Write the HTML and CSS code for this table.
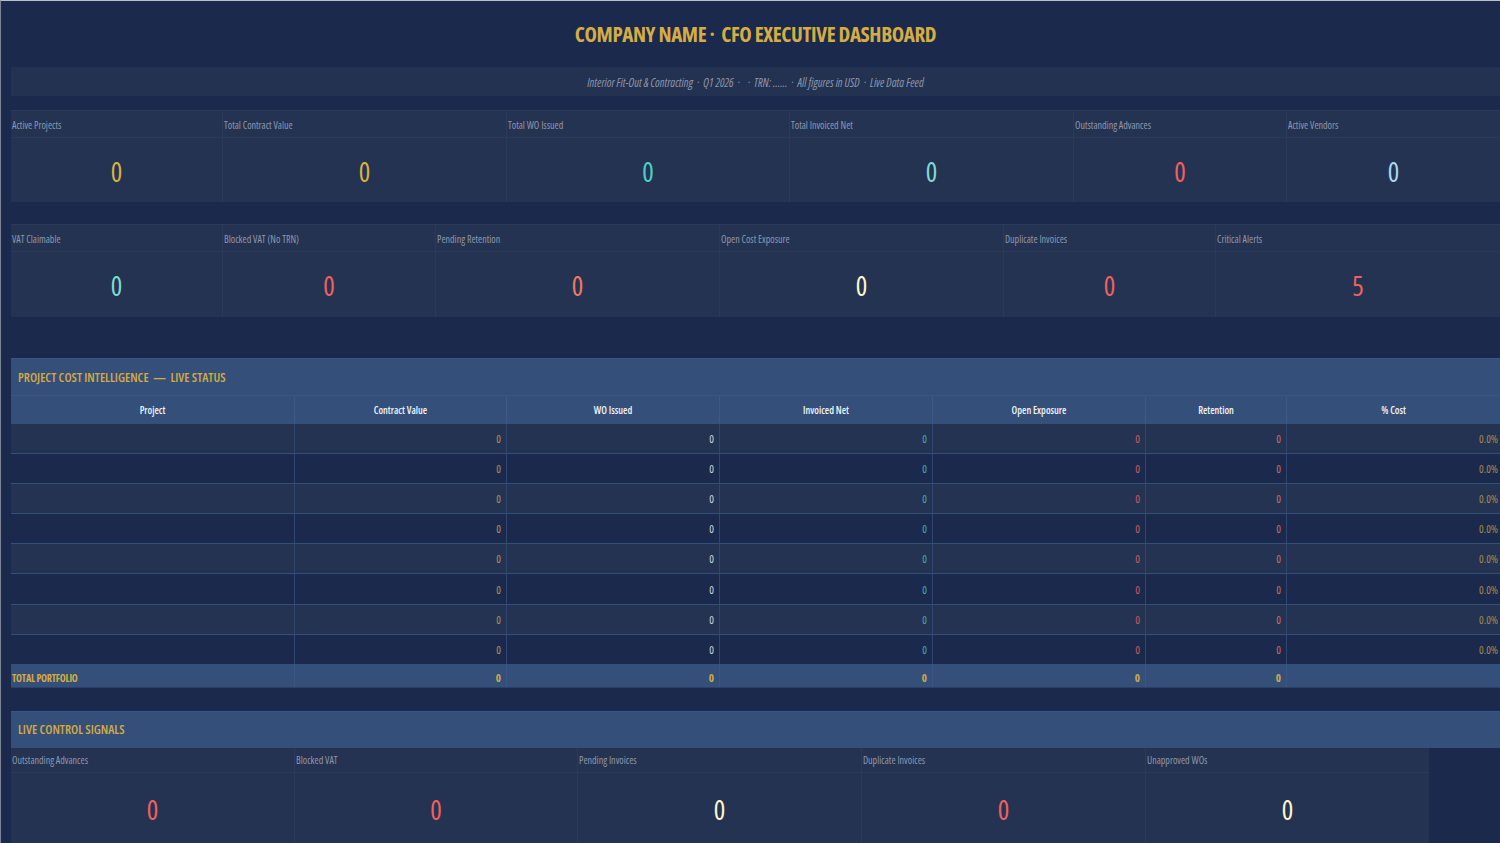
FILE: index.html
```html
<!DOCTYPE html>
<html lang="en">
<head>
<meta charset="utf-8">
<title>CFO Executive Dashboard</title>
<link rel="stylesheet" href="styles.css">
</head>
<body>
<div class="page">
  <header class="title-bar">
    <h1 class="title">COMPANY NAME ·&nbsp; CFO EXECUTIVE DASHBOARD</h1>
  </header>
  <div class="subtitle">Interior Fit-Out &amp; Contracting &nbsp;·&nbsp; Q1 2026 &nbsp;· &nbsp; &nbsp;· &nbsp;TRN: …… &nbsp;· &nbsp;All figures in USD &nbsp;· &nbsp;Live Data Feed</div>

  <section class="kpi-row kpi-row-1">
    <div class="kpi"><div class="kpi-label">Active Projects</div><div class="kpi-value gold">0</div></div>
    <div class="kpi"><div class="kpi-label">Total Contract Value</div><div class="kpi-value gold">0</div></div>
    <div class="kpi"><div class="kpi-label">Total WO Issued</div><div class="kpi-value teal">0</div></div>
    <div class="kpi"><div class="kpi-label">Total Invoiced Net</div><div class="kpi-value mint">0</div></div>
    <div class="kpi"><div class="kpi-label">Outstanding Advances</div><div class="kpi-value red">0</div></div>
    <div class="kpi"><div class="kpi-label">Active Vendors</div><div class="kpi-value sky">0</div></div>
  </section>

  <section class="kpi-row kpi-row-2">
    <div class="kpi"><div class="kpi-label">VAT Claimable</div><div class="kpi-value mint">0</div></div>
    <div class="kpi"><div class="kpi-label">Blocked VAT (No TRN)</div><div class="kpi-value red">0</div></div>
    <div class="kpi"><div class="kpi-label">Pending Retention</div><div class="kpi-value salmon">0</div></div>
    <div class="kpi"><div class="kpi-label">Open Cost Exposure</div><div class="kpi-value cream">0</div></div>
    <div class="kpi"><div class="kpi-label">Duplicate Invoices</div><div class="kpi-value red">0</div></div>
    <div class="kpi"><div class="kpi-label">Critical Alerts</div><div class="kpi-value red">5</div></div>
  </section>

  <section class="block block-table">
    <h2 class="section-title">PROJECT COST INTELLIGENCE &nbsp;—&nbsp; LIVE STATUS</h2>
    <div class="table">
      <div class="tr thead">
        <div class="th">Project</div>
        <div class="th">Contract Value</div>
        <div class="th">WO Issued</div>
        <div class="th">Invoiced Net</div>
        <div class="th">Open Exposure</div>
        <div class="th">Retention</div>
        <div class="th">% Cost</div>
      </div>
      <div class="tr row odd"><div class="td"></div><div class="td c-gold">0</div><div class="td c-white">0</div><div class="td c-teal">0</div><div class="td c-red">0</div><div class="td c-salmon">0</div><div class="td c-olive">0.0%</div></div>
      <div class="tr row even"><div class="td"></div><div class="td c-gold">0</div><div class="td c-white">0</div><div class="td c-teal">0</div><div class="td c-red">0</div><div class="td c-salmon">0</div><div class="td c-olive">0.0%</div></div>
      <div class="tr row odd"><div class="td"></div><div class="td c-gold">0</div><div class="td c-white">0</div><div class="td c-teal">0</div><div class="td c-red">0</div><div class="td c-salmon">0</div><div class="td c-olive">0.0%</div></div>
      <div class="tr row even"><div class="td"></div><div class="td c-gold">0</div><div class="td c-white">0</div><div class="td c-teal">0</div><div class="td c-red">0</div><div class="td c-salmon">0</div><div class="td c-olive">0.0%</div></div>
      <div class="tr row odd"><div class="td"></div><div class="td c-gold">0</div><div class="td c-white">0</div><div class="td c-teal">0</div><div class="td c-red">0</div><div class="td c-salmon">0</div><div class="td c-olive">0.0%</div></div>
      <div class="tr row even"><div class="td"></div><div class="td c-gold">0</div><div class="td c-white">0</div><div class="td c-teal">0</div><div class="td c-red">0</div><div class="td c-salmon">0</div><div class="td c-olive">0.0%</div></div>
      <div class="tr row odd"><div class="td"></div><div class="td c-gold">0</div><div class="td c-white">0</div><div class="td c-teal">0</div><div class="td c-red">0</div><div class="td c-salmon">0</div><div class="td c-olive">0.0%</div></div>
      <div class="tr row even"><div class="td"></div><div class="td c-gold">0</div><div class="td c-white">0</div><div class="td c-teal">0</div><div class="td c-red">0</div><div class="td c-salmon">0</div><div class="td c-olive">0.0%</div></div>
      <div class="tr total"><div class="td total-label">TOTAL PORTFOLIO</div><div class="td">0</div><div class="td">0</div><div class="td">0</div><div class="td">0</div><div class="td">0</div><div class="td"></div></div>
    </div>
  </section>

  <section class="block block-signals">
    <h2 class="section-title">LIVE CONTROL SIGNALS</h2>
    <div class="signals">
      <div class="kpi"><div class="kpi-label">Outstanding Advances</div><div class="kpi-value red">0</div></div>
      <div class="kpi"><div class="kpi-label">Blocked VAT</div><div class="kpi-value red">0</div></div>
      <div class="kpi"><div class="kpi-label">Pending Invoices</div><div class="kpi-value cream">0</div></div>
      <div class="kpi"><div class="kpi-label">Duplicate Invoices</div><div class="kpi-value red">0</div></div>
      <div class="kpi"><div class="kpi-label">Unapproved WOs</div><div class="kpi-value cream">0</div></div>
    </div>
  </section>
</div>
</body>
</html>
```

FILE: styles.css
```css
html, body {
  margin: 0;
  padding: 0;
  height: 100%;
  overflow: hidden;
}
body {
  background: #1b2a4c;
  font-family: "Open Sans", "Noto Sans", "DejaVu Sans Condensed", sans-serif;
  font-stretch: 75%;
  color: #c9cfd9;
  border-top: 1px solid #b9bfca;
  border-left: 1px solid #7b8498;
  box-sizing: border-box;
}
.page {
  padding-left: 10px;
}
.title-bar {
  height: 66px;
  display: flex;
  align-items: center;
  justify-content: center;
}
.title {
  margin: 0;
  font-size: 21px;
  letter-spacing: -0.4px;
  font-weight: 700;
  color: #d6ad44;
}
.subtitle {
  height: 29px;
  background: #243251;
  display: flex;
  align-items: center;
  justify-content: center;
  font-style: italic;
  font-size: 11.7px;
  color: #8d97aa;
}

/* KPI cards */
.kpi-row {
  display: grid;
  background: #243352;
  border-top: 1px solid #2c3b5c;
}
.kpi-row-1 {
  margin-top: 14px;
  grid-template-columns: 212px 284px 283px 284px 213px 1fr;
}
.kpi-row-2 {
  margin-top: 22px;
  grid-template-columns: 212px 213px 284px 284px 212px 1fr;
}
.kpi {
  display: flex;
  flex-direction: column;
  border-right: 1px solid #2b3a5a;
  background: #243352;
}
.kpi:last-child {
  border-right: none;
}
.kpi-label {
  height: 25px;
  padding-top: 1px;
  border-bottom: 1px solid #2b3a5a;
  font-size: 10px;
  color: #8e98ab;
  display: flex;
  align-items: center;
  padding-left: 1px;
  white-space: nowrap;
}
.kpi-value {
  height: 64px;
  display: flex;
  align-items: center;
  justify-content: center;
  font-size: 27px;
  padding-top: 2px;
  box-sizing: border-box;
}
.kpi-row-2 .kpi-value { height: 65px; }

.gold { color: #d9b13e; }
.teal { color: #4ccfc6; }
.mint { color: #7ddbcf; }
.red { color: #f2605f; }
.sky { color: #a6d9ea; }
.salmon { color: #f27a5e; }
.cream { color: #fff6c8; }

/* Sections */
.block-table {
  margin-top: 41px;
}
.block-signals {
  margin-top: 23px;
}
.section-title {
  margin: 0;
  height: 37px;
  display: flex;
  align-items: center;
  padding-left: 7px;
  font-size: 12.6px;
  font-weight: 600;
  color: #d4ab42;
  background: #34507a;
  border-top: 1px solid #3a5784;
  box-sizing: border-box;
  white-space: nowrap;
}

/* Table */
.table {
  display: flex;
  flex-direction: column;
}
.tr {
  display: grid;
  grid-template-columns: 284px 212px 213px 213px 213px 141px 1fr;
}
.thead {
  height: 28px;
  background: #34507a;
  border-top: 1px solid #3b5885;
  box-sizing: border-box;
}
.th {
  display: flex;
  align-items: center;
  justify-content: center;
  font-size: 10px;
  font-weight: 600;
  color: #f1f3f7;
  border-right: 1px solid #3d5a86;
}
.th:last-child { border-right: none; }
.row {
  height: 29.1px;
  border-top: 1px solid #33507a;
}
.row.odd { background: #243352; }
.row.even { background: #1b2a4c; }
.td {
  display: flex;
  align-items: center;
  justify-content: flex-end;
  padding-right: 5px;
  font-size: 11px;
  border-right: 1px solid #2f4670;
  white-space: nowrap;
}
.td:last-child { border-right: none; padding-right: 2px; }
.c-gold { color: #ae9650; }
.c-white { color: #d0d4dc; }
.c-teal { color: #3fb1ab; }
.c-red { color: #cf5a5e; }
.c-salmon { color: #c86f62; }
.c-olive { color: #a08b4e; }

.total {
  height: 23px;
  background: #34507a;
  border-bottom: 1px solid #2a4066;
}
.total .td {
  color: #d2ad42;
  font-weight: 700;
  padding-top: 5px;
  box-sizing: border-box;
  border-right: 1px solid #3a5681;
}
.total .td:last-child { border-right: none; }
.total .total-label {
  justify-content: flex-start;
  padding-left: 1px;
  font-size: 10px;
  letter-spacing: -0.2px;
}

/* Signals */
.signals {
  display: grid;
  grid-template-columns: 284px 283px 284px 284px 283px;
}
.signals .kpi-label {
  height: 24px;
  padding-top: 0;
}
.signals .kpi-value {
  height: 72px;
}
.signals .kpi:last-child {
  border-right: none;
}
```
